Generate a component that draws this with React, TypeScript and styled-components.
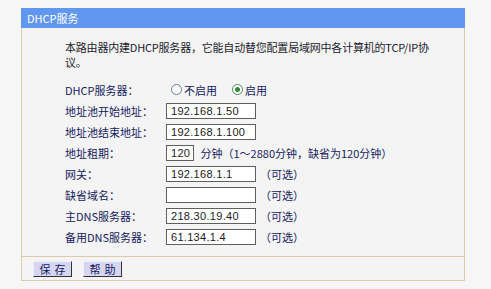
import styled, { createGlobalStyle } from "styled-components"

const GlobalStyle = createGlobalStyle`
  body {
    margin: 0;
    background: #f6f6f6;
    font-family: "Noto Sans CJK SC", "Liberation Sans", sans-serif;
    font-size: 11px;
  }
`

const Page = styled.div`
  width: 491px;
  height: 289px;
  padding: 8px 0 0 21px;
  box-sizing: border-box;
`

// panel with blue title strip and tan border
const Panel = styled.div`
  width: 444px;
  height: 273px;
  display: flex;
  flex-direction: column;
  box-sizing: border-box;
  border: 1px solid #dccbab;
  border-top: none;
  background: #f4f4f4;
`

const Title = styled.div`
  height: 20px;
  margin: 0 -1px;
  padding-left: 6px;
  background: #6197ee;
  color: #fff;
  font-size: 11px;
  line-height: 20px;
`

const Body = styled.div`
  flex: 1;
  padding: 12px 0 0 43px;
`

const Desc = styled.div`
  color: #1c1c2c;
  line-height: 15px;
  margin-bottom: 9px;
  letter-spacing: -0.2px;
`

const Row = styled.div`
  display: grid;
  grid-template-columns: 101px auto;
  align-items: center;
  height: 21px;
  color: #15225e;
`

const Field = styled.div`
  display: flex;
  align-items: center;
  gap: 4px;
`

const Input = styled.div<{ $w?: number }>`
  width: ${(p) => p.$w ?? 90}px;
  height: 16px;
  box-sizing: border-box;
  border: 1px solid #5f5f5f;
  background: #fff;
  padding-left: 4px;
  line-height: 14px;
  color: #1a1a1a;
  font-family: "Liberation Sans", sans-serif;
  font-size: 11px;
  letter-spacing: 0.3px;
`

const Note = styled.span`
  color: #15225e;
`

const RadioLabel = styled.label`
  display: flex;
  align-items: center;
  gap: 2px;
  margin-right: 6px;
`

const Radio = styled.span<{ $on?: boolean }>`
  width: 11px;
  height: 11px;
  box-sizing: border-box;
  border-radius: 50%;
  border: 1px solid ${(p) => (p.$on ? "#4d8a5d" : "#6a7a9a")};
  background: #fff;
  display: flex;
  align-items: center;
  justify-content: center;
  margin-left: 5px;

  &::after {
    content: "";
    width: 5px;
    height: 5px;
    border-radius: 50%;
    background: ${(p) => (p.$on ? "#2f8a3a" : "transparent")};
  }
`

const Footer = styled.div`
  height: 23px;
  border-top: 1px solid #dccbab;
  display: flex;
  align-items: center;
  gap: 11px;
  padding-left: 11px;
`

const Button = styled.button`
  width: 39px;
  height: 16px;
  padding: 0;
  background: #d6d6f2;
  border: 1px solid;
  border-color: #eeeeff #333 #333 #eeeeff;
  color: #15225e;
  font-family: "Noto Sans CJK SC", sans-serif;
  font-size: 11px;
  line-height: 14px;
  letter-spacing: 4px;
  text-indent: 4px;
`

const rows: { label: string; value: string }[] = [
  { label: "地址池开始地址：", value: "192.168.1.50" },
  { label: "地址池结束地址：", value: "192.168.1.100" },
]

const rows2: { label: string; value: string }[] = [
  { label: "网关：", value: "192.168.1.1" },
  { label: "缺省域名：", value: "" },
  { label: "主DNS服务器：", value: "218.30.19.40" },
  { label: "备用DNS服务器：", value: "61.134.1.4" },
]

export default function App() {
  return (
    <Page>
      <GlobalStyle />
      <Panel>
        <Title>DHCP服务</Title>
        <Body>
          <Desc>
            本路由器内建DHCP服务器，它能自动替您配置局域网中各计算机的TCP/IP协
            <br />
            议。
          </Desc>
          <Row>
            <span>DHCP服务器：</span>
            <Field>
              <RadioLabel>
                <Radio />
                不启用
              </RadioLabel>
              <RadioLabel>
                <Radio $on />
                启用
              </RadioLabel>
            </Field>
          </Row>
          {rows.map((r) => (
            <Row key={r.label}>
              <span>{r.label}</span>
              <Field>
                <Input>{r.value}</Input>
              </Field>
            </Row>
          ))}
          <Row>
            <span>地址租期：</span>
            <Field>
              <Input $w={28}>120</Input>
              <Note>&nbsp;分钟（1～2880分钟，缺省为120分钟）</Note>
            </Field>
          </Row>
          {rows2.map((r) => (
            <Row key={r.label}>
              <span>{r.label}</span>
              <Field>
                <Input>{r.value}</Input>
                <Note>（可选）</Note>
              </Field>
            </Row>
          ))}
        </Body>
        <Footer>
          <Button>保存</Button>
          <Button>帮助</Button>
        </Footer>
      </Panel>
    </Page>
  )
}
